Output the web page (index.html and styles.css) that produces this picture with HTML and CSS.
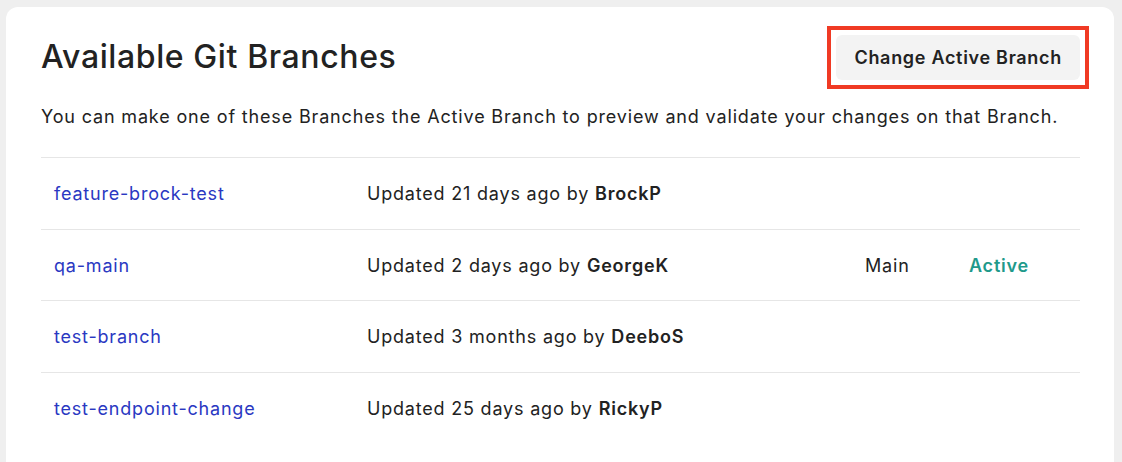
FILE: index.html
```html
<!DOCTYPE html>
<html lang="en">
<head>
<meta charset="utf-8">
<title>Available Git Branches</title>
<link rel="stylesheet" href="styles.css">
</head>
<body>
<main class="card">
  <header class="card-header">
    <h1 class="title">Available Git Branches</h1>
    <span class="highlight"><button class="btn" type="button">Change Active Branch</button></span>
  </header>
  <p class="desc">You can make one of these Branches the Active Branch to preview and validate your changes on that Branch.</p>
  <div class="table">
    <div class="row">
      <a class="name" href="#">feature-brock-test</a>
      <span class="updated">Updated 21 days ago by <b>BrockP</b></span>
      <span class="tag"></span>
      <span class="status"></span>
    </div>
    <div class="row">
      <a class="name" href="#">qa-main</a>
      <span class="updated">Updated 2 days ago by <b>GeorgeK</b></span>
      <span class="tag">Main</span>
      <span class="status">Active</span>
    </div>
    <div class="row">
      <a class="name" href="#">test-branch</a>
      <span class="updated">Updated 3 months ago by <b>DeeboS</b></span>
      <span class="tag"></span>
      <span class="status"></span>
    </div>
    <div class="row">
      <a class="name" href="#">test-endpoint-change</a>
      <span class="updated">Updated 25 days ago by <b>RickyP</b></span>
      <span class="tag"></span>
      <span class="status"></span>
    </div>
  </div>
</main>
</body>
</html>
```

FILE: styles.css
```css
* { box-sizing: border-box; }
html, body { height: 100%; }
body {
  margin: 0;
  background: #efefef;
  padding: 7px 8px 0 6px;
  font-family: Inter, "Noto Sans", sans-serif;
  color: #222;
  overflow: hidden;
}
.card {
  background: #fff;
  border-radius: 12px;
  padding: 0 34px 40px 35px;
  min-height: 500px;
}
.card-header {
  display: flex;
  justify-content: space-between;
  align-items: flex-start;
  padding-top: 28px;
  height: 100px;
}
.title {
  margin: 0;
  font-size: 32px;
  font-weight: 500;
  line-height: 44px;
  letter-spacing: 0.6px;
  color: #222;
}
.highlight {
  display: block;
  border: 4px solid #f03a24;
  padding: 5px;
  margin: -9px -9px 0 0;
}
.btn {
  display: block;
  font-family: inherit;
  font-size: 18px;
  font-weight: 600;
  letter-spacing: 0.7px;
  color: #222;
  background: #f3f3f3;
  border: none;
  border-radius: 6px;
  height: 45px;
  padding: 0 18px;
}
.desc {
  margin: -3px 0 0;
  font-size: 18px;
  line-height: 26px;
  letter-spacing: 0.84px;
  color: #222;
}
.table { margin-top: 27px; }
.row {
  display: grid;
  grid-template-columns: 313px 498px 104px auto;
  align-items: center;
  height: 71.7px;
  padding-left: 13px;
  border-top: 1px solid #e6e6e6;
  font-size: 18px;
  letter-spacing: 0.8px;
}
.name { color: #2a38c2; text-decoration: none; }
.updated b { font-weight: 600; }
.status { color: #1f9a8b; font-weight: 600; }
```
